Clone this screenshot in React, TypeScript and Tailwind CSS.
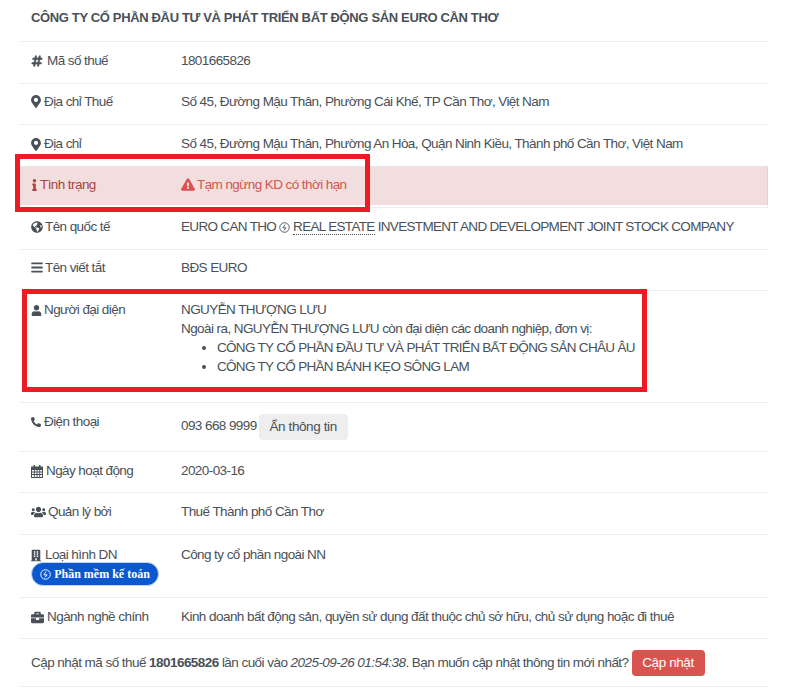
import React from "react";
import { FaHashtag, FaMapMarkerAlt, FaInfo, FaExclamationTriangle, FaGlobeAmericas, FaBars, FaUser, FaPhone, FaUsers, FaBuilding, FaBriefcase } from "react-icons/fa";

function Bolt({ className }: { className: string }) {
  return (
    <svg viewBox="0 0 12 12" className={className} fill="none" stroke="currentColor" strokeWidth="1">
      <circle cx="6" cy="6" r="5.2" />
      <path d="M6.6 2.8 4.2 6.4h3.6L5.4 9.2" strokeWidth="1" />
    </svg>
  );
}

function Calendar({ className }: { className: string }) {
  return (
    <svg viewBox="0 0 12 13" className={className} fill="currentColor">
      <path d="M2.5 0h1.5v2.4H2.5zM8 0h1.500v2.4H8z" />
      <path fillRule="evenodd" d="M0 1.500h12V13H0zM1 5v1.600h1.900V5zm2.800 0v1.600h1.800V5zm2.700 0v1.600h1.800V5zm2.700 0v1.600H11V5zM1 7.500v1.600h1.900V7.500zm2.800 0v1.600h1.800V7.500zm2.700 0v1.600h1.800V7.500zm2.700 0v1.600H11V7.500zM1 10v2h1.900v-2zm2.800 0v2h1.800v-2zm2.700 0v2h1.800v-2zm2.700 0v2H11v-2z" />
    </svg>
  );
}

function Row({ h, icon, label, children }: { h: string; icon: React.ReactNode; label: string; children: React.ReactNode }) {
  return (
    <div className={`flex border-t border-[#eeeeee] pl-[11px] ${h}`}>
      <div className="w-[150px] shrink-0 flex items-start">
        <span className="flex items-center">{icon}<span>{label}</span></span>
      </div>
      <div className="flex-1 whitespace-nowrap">{children}</div>
    </div>
  );
}

export default function App() {
  return (
    <div className="relative w-[808px] h-[696px] bg-white overflow-hidden text-[13.5px] tracking-[-0.58px] leading-[20px] text-[#495057] font-['Liberation_Sans',Arial,sans-serif]">
      <div className="ml-[20px] w-[748px]">
        <div className="h-[41px] pl-[11px] pt-[8px] text-[13px] tracking-[-0.35px] font-bold whitespace-nowrap">CÔNG TY CỔ PHẦN ĐẦU TƯ VÀ PHÁT TRIỂN BẤT ĐỘNG SẢN EURO CẦN THƠ</div>
        <Row h="h-[41.500px] pt-[9px]" icon={<FaHashtag className="w-[12px] h-[12px] mr-[4px] stroke-current stroke-[24px]" />} label="Mã số thuế">1801665826</Row>
        <Row h="h-[41.500px] pt-[8px]" icon={<FaMapMarkerAlt className="w-[10px] h-[13px] mr-[3px]" />} label="Địa chỉ Thuế">Số 45, Đường Mậu Thân, Phường Cái Khế, TP Cần Thơ, Việt Nam</Row>
        <Row h="h-[41.500px] pt-[9px]" icon={<FaMapMarkerAlt className="w-[10px] h-[13px] mr-[3px]" />} label="Địa chỉ">Số 45, Đường Mậu Thân, Phường An Hòa, Quận Ninh Kiều, Thành phố Cần Thơ, Việt Nam</Row>
        <div className="flex h-[41.500px] pt-[8px] pl-[11px] bg-[#f2dede] border-t border-[#e6e6e6] border-r border-r-[#ebccd1] border-b-2 border-b-white text-[#a94442]">
          <div className="w-[150px] shrink-0 flex items-center h-[20px]"><FaInfo className="w-[5px] h-[12px] mr-[3px] ml-[1px]" /><span>Tình trạng</span></div>
          <div className="flex items-center h-[20px] text-[#d9534f]"><FaExclamationTriangle className="w-[14px] h-[13px] mr-[2px]" /><span>Tạm ngừng KD có thời hạn</span></div>
        </div>
        <Row h="h-[41.500px] pt-[9px]" icon={<FaGlobeAmericas className="w-[12px] h-[12px] mr-[2px]" />} label="Tên quốc tế">
          <span className="flex items-center tracking-[-0.68px]">EURO CAN THO<Bolt className="w-[11px] h-[11px] mx-[3px]" /><span className="border-b border-dotted border-[#495057] leading-[15px]">REAL ESTATE</span><span className="whitespace-pre"> INVESTMENT AND DEVELOPMENT JOINT STOCK COMPANY</span></span>
        </Row>
        <Row h="h-[41.500px] pt-[8px]" icon={<FaBars className="w-[12px] h-[13px] mr-[2px]" />} label="Tên viết tắt">BĐS EURO</Row>
        <Row h="h-[112px] pt-[9px]" icon={<FaUser className="w-[11px] h-[11px] mr-[2px]" />} label="Người đại diện">
          <div className="leading-[19px]">
            <div>NGUYỄN THƯỢNG LƯU</div>
            <div>Ngoài ra, NGUYỄN THƯỢNG LƯU còn đại diện các doanh nghiệp, đơn vị:</div>
            <ul className="list-disc pl-[36px] tracking-[-0.69px]">
              <li>CÔNG TY CỔ PHẦN ĐẦU TƯ VÀ PHÁT TRIỂN BẤT ĐỘNG SẢN CHÂU ÂU</li>
              <li>CÔNG TY CỔ PHẦN BÁNH KẸO SÔNG LAM</li>
            </ul>
          </div>
        </Row>
        <Row h="h-[49px] pt-[9px]" icon={<FaPhone className="w-[10px] h-[10px] mr-[3px] -scale-x-100" />} label="Điện thoại">
          <div className="flex items-start pt-[2px]">
            <span className="pt-[2px]">093 668 9999</span>
            <span className="ml-[2px] mt-0 w-[89px] h-[26px] rounded-[4px] bg-[#eeeeee] flex items-center justify-center tracking-[-0.4px]">Ẩn thông tin</span>
          </div>
        </Row>
        <Row h="h-[41px] pt-[9px]" icon={<Calendar className="w-[12px] h-[13px] mr-[3px]" />} label="Ngày hoạt động">2020-03-16</Row>
        <Row h="h-[42px] pt-[9px]" icon={<FaUsers className="w-[15px] h-[14px] mr-[2px]" />} label="Quản lý bởi">Thuế Thành phố Cần Thơ</Row>
        <div className="flex border-t border-[#eeeeee] pl-[11px] h-[63px] pt-[10px] whitespace-nowrap">
          <div className="w-[150px] shrink-0">
            <div className="flex items-center"><FaBuilding className="w-[10px] h-[13px] mr-[4px]" /><span>Loại hình DN</span></div>
            <div className="mt-[-3px] w-[128px] h-[24px] rounded-full bg-[#0b57d0] border border-[#c2d4f0] text-white text-[12px] tracking-normal font-bold font-['Liberation_Serif',serif] flex items-center justify-center gap-[3px]">
              <Bolt className="w-[11px] h-[11px]" /><span>Phần mềm kế toán</span>
            </div>
          </div>
          <div>Công ty cổ phần ngoài NN</div>
        </div>
        <Row h="h-[41px] pt-[9px] tracking-[-0.55px]" icon={<FaBriefcase className="w-[13px] h-[13px] mr-[3px]" />} label="Ngành nghề chính">Kinh doanh bất động sản, quyền sử dụng đất thuộc chủ sở hữu, chủ sử dụng hoặc đi thuê</Row>
        <div className="flex items-center border-t border-b border-[#eeeeee] h-[49px] pl-[11px] whitespace-nowrap tracking-[-0.55px]">
          <span>Cập nhật mã số thuế <b>1801665826</b> lần cuối vào <i>2025-09-26 01:54:38</i>. Bạn muốn cập nhật thông tin mới nhất?</span>
          <span className="ml-[3px] w-[73px] h-[26px] rounded-[4px] bg-[#d9534f] text-white flex items-center justify-center tracking-[-0.4px]">Cập nhật</span>
        </div>
      </div>
      <div className="absolute left-[15px] top-[154px] w-[355px] h-[58px] border-[5px] border-[#ed1c24]" />
      <div className="absolute left-[22px] top-[289px] w-[625px] h-[103px] border-[5px] border-[#ed1c24]" />
    </div>
  );
}
